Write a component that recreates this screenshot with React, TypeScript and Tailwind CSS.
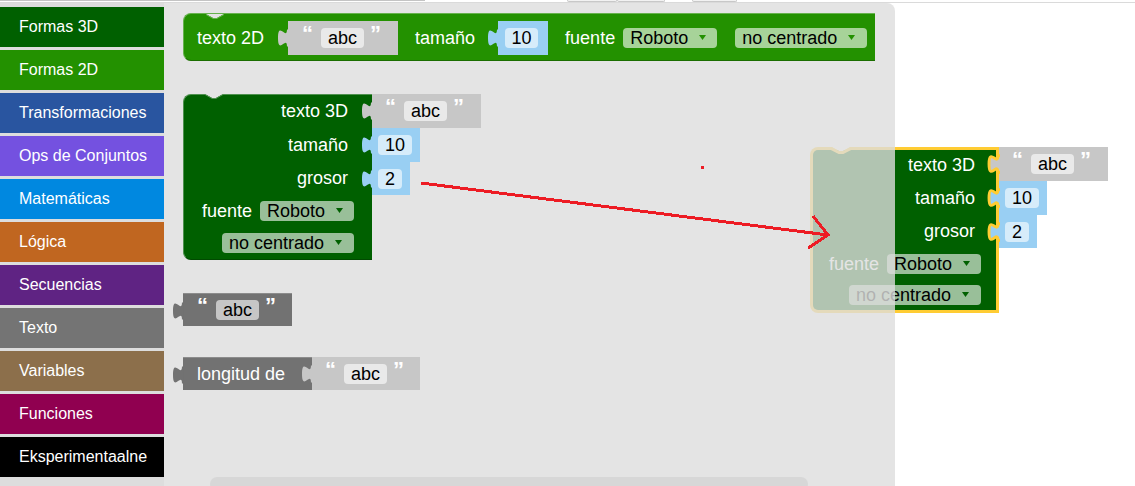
import React from 'react';

const CATEGORIES = [
  { name: 'Formas 3D', bg: 'bg-[#006000]' },
  { name: 'Formas 2D', bg: 'bg-[#239100]' },
  { name: 'Transformaciones', bg: 'bg-[#2955a0]' },
  { name: 'Ops de Conjuntos', bg: 'bg-[#7451e0]' },
  { name: 'Matemáticas', bg: 'bg-[#0088e0]' },
  { name: 'Lógica', bg: 'bg-[#c06620]' },
  { name: 'Secuencias', bg: 'bg-[#5f2383]' },
  { name: 'Texto', bg: 'bg-[#747474]' },
  { name: 'Variables', bg: 'bg-[#8c6f4b]' },
  { name: 'Funciones', bg: 'bg-[#900050]' },
  { name: 'Eksperimentaalne', bg: 'bg-[#000000]' },
];

// puzzle tab of an output connection, sticks out to the left of its block
function Tab({ fill, stroke }: { fill: string; stroke?: string }) {
  const d = 'M9.8,5 L8,5 C8,15 0,-3 0,12.5 C0,28 8,10 8,20 L9.8,20';
  return (
    <svg className="absolute left-[-10px] top-[3px] overflow-visible" width="11" height="28" viewBox="0 0 9.8 25">
      <path d={d + ' Z'} fill={fill} />
      {stroke && <path d={d} fill="none" stroke={stroke} strokeWidth="2.6" />}
    </svg>
  );
}

// previous-connection notch cut in the top edge
function Notch({ bg, line, thick }: { bg: string; line: string; thick?: boolean }) {
  return (
    <svg className="absolute left-[22px] top-0 overflow-visible" width="18" height="8" viewBox="0 0 18 8">
      <path d="M0,0 L18,0 L11,4 L7,4 Z" fill={bg} />
      {thick ? (
        <path d="M-1,1.5 L7,5.5 L11,5.5 L19,1.5" fill="none" stroke={line} strokeWidth="3" />
      ) : (
        <path d="M0,0.5 L7,4.5 L11,4.5 L18,0.5" fill="none" stroke={line} strokeWidth="1" />
      )}
    </svg>
  );
}

function Quote({ children, className = '' }: { children: React.ReactNode; className?: string }) {
  return (
    <span className={`-translate-y-[4px] text-[22px] font-bold leading-none text-white ${className}`}>{children}</span>
  );
}

function Pill({ children, className = '' }: { children: React.ReactNode; className?: string }) {
  return (
    <div className={`flex h-[20px] items-center justify-center rounded-[4px] bg-white/60 text-[18px] leading-[20px] text-black ${className}`}>
      {children}
    </div>
  );
}

function Dropdown({ label, arrow, className = '' }: { label: string; arrow: string; className?: string }) {
  return (
    <div className={`flex h-[20px] items-center rounded-[4px] bg-white/60 pl-[7px] text-[18px] leading-[20px] text-black ${className}`}>
      <span>{label}</span>
      <svg className="mb-[2px] ml-[11px]" width="7" height="5" viewBox="0 0 7 5">
        <path d="M0,0 L7,0 L3.5,5 Z" fill={arrow} />
      </svg>
    </div>
  );
}

function StringShadow({ className = '', stroke }: { className?: string; stroke?: string }) {
  return (
    <div className={`relative flex items-center bg-[#c7c7c7] pl-[13px] ${className}`}>
      <Tab fill="#c7c7c7" stroke={stroke} />
      <Quote>“</Quote>
      <Pill className="ml-[8px] w-[43px]">abc</Pill>
      <Quote className="ml-[6px]">”</Quote>
    </div>
  );
}

function NumberShadow({ value, className = '', pill, stroke }: { value: string; className?: string; pill: string; stroke?: string }) {
  return (
    <div className={`relative flex items-center bg-[#99cff3] pl-[6px] ${className}`}>
      <Tab fill="#99cff3" stroke={stroke} />
      <Pill className={pill}>{value}</Pill>
    </div>
  );
}

function Text2DBlock() {
  return (
    <div className="relative flex h-[48px] w-[692px] items-center rounded-l-[8px] border-y border-l border-t-[#66b24d] border-l-[#66b24d] border-b-[#1b6e00] bg-[#239100] pl-[13px] pt-[2px] text-[18px] text-white">
      <Notch bg="#e4e4e4" line="#66b24d" />
      <span>texto 2D</span>
      <StringShadow className="ml-[24px] h-[34px] w-[110px] pl-[14px]" />
      <span className="ml-[17px]">tamaño</span>
      <NumberShadow value="10" className="ml-[23px] h-[34px] w-[50px] pl-[7px]" pill="w-[33px]" />
      <span className="ml-[17px]">fuente</span>
      <Dropdown label="Roboto" arrow="#239100" className="ml-[8px] w-[94px]" />
      <Dropdown label="no centrado" arrow="#239100" className="ml-[18px] w-[132px]" />
    </div>
  );
}

function Text3DBlock({ selected = false }: { selected?: boolean }) {
  const side = selected ? 'border-x-[3px] border-[#ffcc33]' : 'border-l border-l-[#4f914f]';
  const padIn = selected ? 'pr-[21px]' : 'pr-[24px]';
  const padDrop = selected ? 'pr-[15px]' : 'pr-[18px]';
  const top = selected ? 'border-t-[3px]' : 'border-t border-t-[#4f914f]';
  const bottom = selected ? 'border-b-[3px]' : 'border-b border-b-[#004a00]';
  const stroke = selected ? '#ffcc33' : undefined;
  return (
    <div className="relative flex flex-col text-[18px] text-white">
      <Notch bg={selected ? '#ffffff' : '#e4e4e4'} line={selected ? '#ffcc33' : '#4f914f'} thick={selected} />
      <div className="flex h-[34px]">
        <div className={`flex w-[189px] items-center justify-end rounded-tl-[8px] bg-[#006000] ${side} ${top} ${padIn}`}>texto 3D</div>
        <StringShadow className="w-[109px]" stroke={stroke} />
      </div>
      <div className="flex h-[34px]">
        <div className={`flex w-[189px] items-center justify-end bg-[#006000] ${side} ${padIn}`}>tamaño</div>
        <NumberShadow value="10" className="w-[48px]" pill="w-[34px]" stroke={stroke} />
      </div>
      <div className="flex h-[33px]">
        <div className={`flex w-[189px] items-center justify-end bg-[#006000] ${side} ${padIn}`}>grosor</div>
        <NumberShadow value="2" className="w-[38px]" pill="w-[24px]" stroke={stroke} />
      </div>
      <div className={`flex h-[32px] w-[189px] items-center justify-end bg-[#006000] ${side} ${padDrop}`}>
        <span>fuente</span>
        <Dropdown label="Roboto" arrow="#006000" className="ml-[8px] w-[94px]" />
      </div>
      <div className={`flex h-[33px] w-[189px] items-center justify-end rounded-bl-[8px] bg-[#006000] ${side} ${bottom} ${padDrop}`}>
        <Dropdown label="no centrado" arrow="#006000" className="w-[132px]" />
      </div>
    </div>
  );
}

function TextBlock() {
  return (
    <div className="relative flex h-[33px] w-[109px] items-center border-t border-t-[#8c8c8c] bg-[#727272] pl-[14px]">
      <Tab fill="#727272" />
      <Quote>“</Quote>
      <Pill className="ml-[8px] w-[43px]">abc</Pill>
      <Quote className="ml-[6px]">”</Quote>
    </div>
  );
}

function LengthBlock() {
  return (
    <div className="flex h-[33px] text-[18px] text-white">
      <div className="relative flex w-[129px] items-center border-t border-t-[#8c8c8c] bg-[#727272] pl-[14px]">
        <Tab fill="#727272" />
        longitud de
      </div>
      <StringShadow className="w-[108px]" />
    </div>
  );
}

export default function App() {
  return (
    <div className="relative flex h-[486px] w-[1135px] flex-col overflow-hidden bg-white font-['Liberation_Sans',Arial,sans-serif]">
      {/* top edge with the bottoms of the buttons above */}
      <div className="relative h-[3px] shrink-0 border-b border-b-[#dadada] bg-white">
        <div className="h-px w-[425px] bg-[#c4c4c4]" />
        <div className="absolute left-[567px] top-0 h-[2px] w-[50px] rounded-b-[2px] border-x border-b border-[#c8c8c8] bg-[#f2f2f2]" />
        <div className="absolute left-[617px] top-0 h-[2px] w-[48px] rounded-b-[2px] border-x border-b border-[#c8c8c8] bg-[#f2f2f2]" />
        <div className="absolute left-[692px] top-0 h-[2px] w-[45px] rounded-b-[2px] border-x border-b border-[#c8c8c8] bg-[#f2f2f2]" />
      </div>

      <div className="flex min-h-0 flex-1">
        {/* toolbox */}
        <div className="flex w-[164px] shrink-0 flex-col gap-[3px] bg-[#dddddd] pt-[4px]">
          {CATEGORIES.map((c) => (
            <div key={c.name} className={`flex h-[40px] items-center pl-[19px] text-[16px] text-white ${c.bg}`}>
              {c.name}
            </div>
          ))}
        </div>

        {/* workspace */}
        <div className="relative flex-1 bg-white">
          <div className="absolute left-[646px] top-[144px]">
            <Text3DBlock selected />
          </div>

          {/* flyout */}
          <div className="absolute left-0 top-0 z-10 h-full w-[731px] overflow-hidden rounded-tr-[8px] bg-[#dddddd]/80">
            <div className="flex flex-col items-start pl-[19px] pt-[10px]">
              <Text2DBlock />
              <div className="mt-[33px]">
                <Text3DBlock />
              </div>
              <div className="mt-[33px] text-[18px]">
                <TextBlock />
              </div>
              <div className="mt-[31px]">
                <LengthBlock />
              </div>
            </div>
            <div className="absolute left-[46px] top-[474px] h-[14px] w-[598px] rounded-[7px] bg-[#d7d7d7]" />
          </div>
        </div>
      </div>

      {/* hand-drawn red arrow */}
      <svg className="pointer-events-none absolute left-0 top-0 z-20" width="1135" height="486" shapeRendering="crispEdges">
        <line x1="421" y1="183" x2="828" y2="235" stroke="#ed1c24" strokeWidth="3" />
        <polyline points="813,216 828,235 808,248" fill="none" stroke="#ed1c24" strokeWidth="3" />
        <rect x="701" y="166" width="3" height="3" fill="#ed1c24" />
      </svg>
    </div>
  );
}
